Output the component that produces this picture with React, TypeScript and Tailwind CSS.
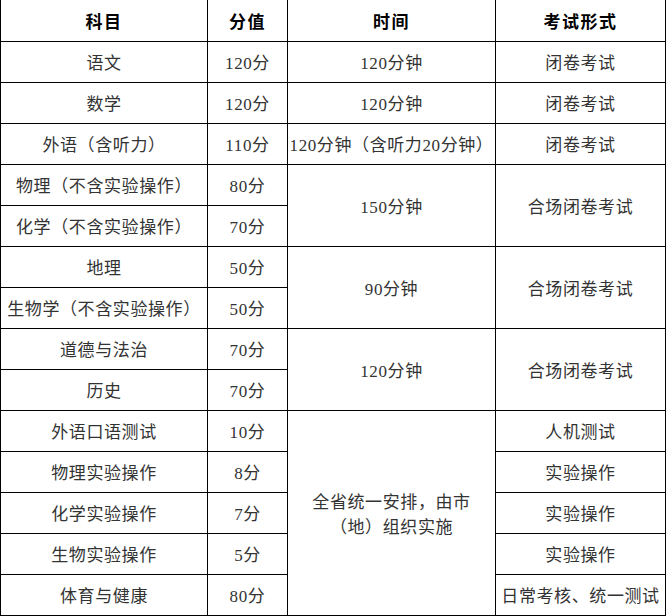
const font = { fontFamily: '"Liberation Serif", "Noto Sans CJK SC", serif' }

type Cell = { text: React.ReactNode; span?: number }
type Row = [string, string, Cell | null, Cell | null]

const rows: Row[] = [
  ['语文', '120分', { text: '120分钟' }, { text: '闭卷考试' }],
  ['数学', '120分', { text: '120分钟' }, { text: '闭卷考试' }],
  ['外语（含听力）', '110分', { text: '120分钟（含听力20分钟）' }, { text: '闭卷考试' }],
  ['物理（不含实验操作）', '80分', { text: '150分钟', span: 2 }, { text: '合场闭卷考试', span: 2 }],
  ['化学（不含实验操作）', '70分', null, null],
  ['地理', '50分', { text: '90分钟', span: 2 }, { text: '合场闭卷考试', span: 2 }],
  ['生物学（不含实验操作）', '50分', null, null],
  ['道德与法治', '70分', { text: '120分钟', span: 2 }, { text: '合场闭卷考试', span: 2 }],
  ['历史', '70分', null, null],
  [
    '外语口语测试',
    '10分',
    {
      text: (
        <>
          <span className="block">全省统一安排，由市</span>
          <span className="block">（地）组织实施</span>
        </>
      ),
      span: 5,
    },
    { text: '人机测试' },
  ],
  ['物理实验操作', '8分', null, { text: '实验操作' }],
  ['化学实验操作', '7分', null, { text: '实验操作' }],
  ['生物实验操作', '5分', null, { text: '实验操作' }],
  ['体育与健康', '80分', null, { text: '日常考核、统一测试' }],
]

const spanClass: Record<number, string> = {
  1: 'row-span-1',
  2: 'row-span-2',
  5: 'row-span-5',
}

const cellBase =
  'flex flex-col items-center justify-center pt-[3px] text-center whitespace-nowrap border-r border-b border-black'

export default function App() {
  return (
    <div className="w-[667px] h-[616px] bg-white overflow-hidden" style={font}>
      <div className="grid grid-cols-[208px_80px_208px_170px] grid-rows-[42px_repeat(14,41px)] text-[17px] tracking-[0.6px] leading-[25px] text-[#333]">
        {['科目', '分值', '时间', '考试形式'].map((h, i) => (
          <div
            key={h}
            className={`${cellBase} font-bold text-black tracking-[1.5px] ${i === 0 ? 'border-l' : ''}`}
          >
            {h}
          </div>
        ))}
        {rows.map((r, ri) => (
          <div key={ri} className="contents">
            <div className={`${cellBase} border-l`}>{r[0]}</div>
            <div className={cellBase}>{r[1]}</div>
            {r[2] && (
              <div className={`${cellBase} col-start-3 ${spanClass[r[2].span ?? 1]}`}>{r[2].text}</div>
            )}
            {r[3] && (
              <div className={`${cellBase} col-start-4 ${spanClass[r[3].span ?? 1]}`}>{r[3].text}</div>
            )}
          </div>
        ))}
      </div>
    </div>
  )
}
